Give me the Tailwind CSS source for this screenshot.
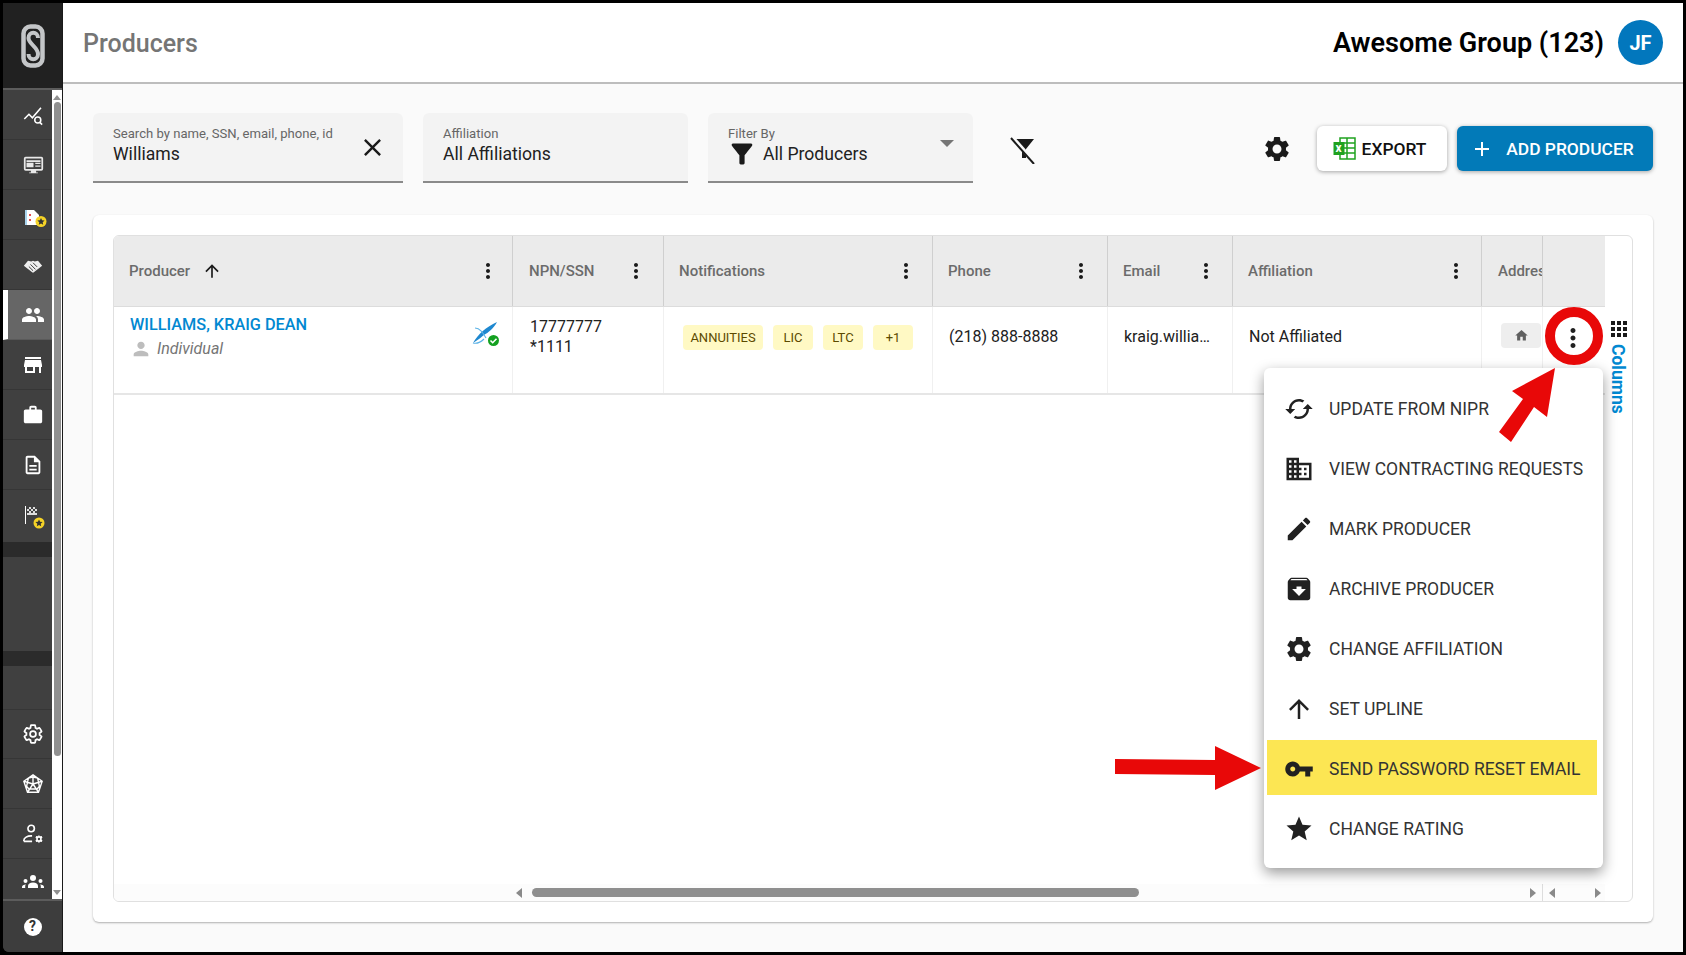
<!DOCTYPE html>
<html><head><meta charset="utf-8"><script src="https://cdn.jsdelivr.net/npm/@tailwindcss/browser@4"></script></head>
<body class="bg-black">
<div class="relative w-[1686px] h-[955px] overflow-hidden bg-black p-[3px] flex font-['Roboto',sans-serif] text-[#212121]">

<!-- SIDEBAR -->
<aside class="w-[60px] shrink-0 flex flex-col bg-[#404040] rounded-bl-md overflow-hidden border-r border-[#1a1a1a]">
  <div class="h-[87px] shrink-0 bg-[#212121] border-b-2 border-[#5c5c5c] flex items-center justify-center pt-[1px]">
    <svg class="w-[24px] h-[44px]" viewBox="0 0 24 44" fill="none" stroke="#c4c6c8"><rect x="2.500" y="2.500" width="19" height="39" rx="7" stroke-width="4.500"/><path d="M17 14c0-7-9.500-7-9.500 0c0 6 9.500 9 9.500 16c0 7-9.500 7-9.500 0" stroke-width="4"/></svg>
  </div>
  <div class="flex-1 flex min-h-0">
    <div class="w-[49px] flex flex-col text-white">
      <div class="h-[50px] shrink-0 flex items-center justify-center pl-[11px] border-b border-[#363636]">
        <svg class="w-[22px] h-[22px]" viewBox="0 0 24 24" fill="none" stroke="white" stroke-width="1.700"><path d="M2.500 16.400l5.100-5.200 3.700 3.800L20.700 4"/><circle cx="17.200" cy="17.500" r="3.300"/><path d="M19.500 20l2.500 2.500"/></svg>
      </div>
      <div class="h-[50px] shrink-0 flex items-center justify-center pl-[11px] border-b border-[#363636]">
        <svg class="w-[21px] h-[21px]" viewBox="0 0 24 24" fill="#e8e8e8"><path d="M3 3h18a2 2 0 0 1 2 2v12a2 2 0 0 1-2 2h-6v2h2v1H7v-1h2v-2H3a2 2 0 0 1-2-2V5a2 2 0 0 1 2-2zm0 2v12h18V5zM4 7h16v2H4zm0 3h8v5H4zm10 0h6v1.500h-6zm0 3h6v1.500h-6z"/></svg>
      </div>
      <div class="h-[50px] shrink-0 flex items-center justify-center pl-[13px] pt-[5px] border-b border-[#363636]">
        <svg class="w-[26px] h-[26px]" viewBox="0 0 26 26"><path d="M4 6h9l5 5v10H4z" fill="white"/><path d="M4 6h2v15H4z" fill="#a9d4ee"/><path d="M8 10h2v2H8zm0 5h2v2H8z" fill="#e25050"/><circle cx="20" cy="17.500" r="5.500" fill="#f5d327"/><path d="M20 14l1.100 2.300 2.500.3-1.900 1.700.5 2.500-2.200-1.300-2.200 1.300.5-2.500-1.900-1.700 2.500-.3z" fill="#333"/></svg>
      </div>
      <div class="h-[50px] shrink-0 flex items-center justify-center pl-[11px] pt-[4px] border-b border-[#363636]">
        <svg class="w-[20px] h-[15px]" viewBox="0 0 24 16" fill="#eeeeee"><path d="M1 7L6 1l4 1 2-1 2 1 4-1 5 6-10 8q-1 1-2 0z"/><path d="M7 8l5 5M9 5.500l6 6M12 3.500l5 5" stroke="#404040" stroke-width="1.200"/></svg>
      </div>
      <div class="h-[50px] shrink-0 flex items-center bg-[#666] border-l-[5px] border-white border-b border-b-[#5a5a5a] justify-center pl-[6px]">
        <svg class="w-[24px] h-[24px]" viewBox="0 0 24 24" fill="white"><path d="M16 11c1.660 0 2.990-1.340 2.990-3S17.660 5 16 5c-1.660 0-3 1.340-3 3s1.340 3 3 3zm-8 0c1.660 0 2.990-1.340 2.990-3S9.660 5 8 5C6.340 5 5 6.340 5 8s1.340 3 3 3zm0 2c-2.330 0-7 1.170-7 3.500V19h14v-2.500c0-2.330-4.670-3.500-7-3.500zm8 0c-.29 0-.62.02-.97.05 1.160.84 1.970 1.970 1.970 3.450V19h6v-2.500c0-2.330-4.670-3.500-7-3.500z"/></svg>
      </div>
      <div class="h-[50px] shrink-0 flex items-center justify-center pl-[11px] border-b border-[#363636]">
        <svg class="w-[20px] h-[20px]" viewBox="2 3 20 18" fill="white"><path d="M20 4H4v2h16V4zm1 10v-2l-1-5H4l-1 5v2h1v6h10v-6h4v6h2v-6h1zm-9 4H6v-4h6v4z"/></svg>
      </div>
      <div class="h-[50px] shrink-0 flex items-center justify-center pl-[11px] border-b border-[#363636]">
        <svg class="w-[22px] h-[22px]" viewBox="0 0 24 24" fill="white"><path d="M20 6h-4V4c0-1.110-.89-2-2-2h-4c-1.110 0-2 .89-2 2v2H4c-1.110 0-1.990.89-1.990 2L2 19c0 1.110.89 2 2 2h16c1.110 0 2-.89 2-2V8c0-1.110-.89-2-2-2zm-6 0h-4V4h4v2z"/></svg>
      </div>
      <div class="h-[50px] shrink-0 flex items-center justify-center pl-[11px] pt-[1px] border-b border-[#363636]">
        <svg class="w-[22px] h-[22px]" viewBox="0 0 24 24" fill="white"><path d="M8 16h8v2H8zm0-4h8v2H8zm6-10H6c-1.100 0-1.990.9-1.990 2L4 20c0 1.100.89 2 1.990 2H18c1.100 0 2-.9 2-2V8l-6-6zm4 18H6V4h7v5h5v11z"/></svg>
      </div>
      <div class="h-[52px] shrink-0 flex items-center justify-center pl-[13px] pt-[3px]">
        <svg class="w-[26px] h-[28px]" viewBox="0 0 26 28"><path d="M4 2h1v18H4z" fill="white"/><path d="M6 3h10v8H6z" fill="#ddd"/><path d="M6 3h2v2H6zm4 0h2v2h-2zm4 0h2v2h-2zM8 5h2v2H8zm4 0h2v2h-2zM6 7h2v2H6zm4 0h2v2h-2zm4 0h2v2h-2z" fill="#444"/><circle cx="18" cy="19" r="5.500" fill="#f5d327"/><path d="M18 15.500l1.100 2.300 2.500.3-1.900 1.700.5 2.500-2.200-1.300-2.200 1.300.5-2.500-1.900-1.700 2.500-.3z" fill="#333"/></svg>
      </div>
      <div class="h-[15px] shrink-0 bg-[#2b2b2b]"></div>
      <div class="h-[43px] shrink-0"></div>
      <div class="h-[51px] shrink-0"></div>
      <div class="h-[15px] shrink-0 bg-[#2b2b2b]"></div>
      <div class="h-[44px] shrink-0 border-b border-[#363636]"></div>
      <div class="h-[49px] shrink-0 flex items-center justify-center pl-[11px] border-b border-[#363636]">
        <svg class="w-[22px] h-[22px]" viewBox="0 0 24 24" fill="none" stroke="white" stroke-width="1.900"><path d="M19.140 12.940c.04-.3.06-.61.06-.94 0-.32-.02-.64-.07-.94l2.030-1.580c.18-.14.23-.41.12-.61l-1.920-3.320c-.12-.22-.37-.29-.59-.22l-2.390.96c-.5-.38-1.030-.7-1.620-.94l-.36-2.540c-.04-.24-.24-.41-.48-.41h-3.840c-.24 0-.43.17-.47.41l-.36 2.540c-.59.24-1.130.57-1.620.94l-2.390-.96c-.22-.08-.47 0-.59.22L2.740 8.870c-.12.21-.08.47.12.61l2.030 1.580c-.05.3-.09.63-.09.94s.02.64.07.94l-2.030 1.580c-.18.14-.23.41-.12.61l1.920 3.320c.12.22.37.29.59.22l2.390-.96c.5.38 1.030.7 1.620.94l.36 2.540c.05.24.24.41.48.41h3.840c.24 0 .44-.17.47-.41l.36-2.540c.59-.24 1.130-.56 1.620-.94l2.390.96c.22.08.47 0 .59-.22l1.920-3.320c.12-.22.07-.47-.12-.61l-2.010-1.580z"/><circle cx="12" cy="12" r="3.200"/></svg>
      </div>
      <div class="h-[50px] shrink-0 flex items-center justify-center pl-[11px] border-b border-[#363636]">
        <svg class="w-[22px] h-[22px]" viewBox="0 0 24 24" fill="none" stroke="white" stroke-width="1.500"><path d="M12 2l10 7-4 12H6L2 9zM12 2v10M22 9l-10 3M18 21l-6-9M6 21l6-9M2 9l10 3M7 5.500l-2 9 2.500 3h9l2.500-3-2-9-5-1z"/></svg>
      </div>
      <div class="h-[50px] shrink-0 flex items-center justify-center pl-[11px] border-b border-[#363636]">
        <svg class="w-[22px] h-[22px]" viewBox="0 0 24 24" fill="none" stroke="white" stroke-width="1.800"><circle cx="10" cy="6" r="3.500"/><path d="M2 20v-1c0-3 4-5 8-5h1M2 20h9"/><path d="M18.500 13l1 1.500 2-.3.8 1.800-1.200 1.500 1.200 1.500-.8 1.800-2-.3-1 1.500-1-1.500-2 .3-.8-1.800 1.200-1.500-1.200-1.500.8-1.800 2 .3z" fill="white" stroke="none"/><circle cx="18.500" cy="17.500" r="1.300" fill="#404040" stroke="none"/></svg>
      </div>
      <div class="h-[40px] shrink-0 flex items-center justify-center pl-[11px]">
        <svg class="w-[24px] h-[24px] translate-y-[3px]" viewBox="0 0 24 24" fill="white"><circle cx="12" cy="8" r="3"/><circle cx="4.500" cy="11" r="2"/><circle cx="19.500" cy="11" r="2"/><path d="M7 18v-2c0-2 2-3.500 5-3.500s5 1.500 5 3.500v2zM1 18v-1c0-1.500 1.500-2.500 4-2.500-.5.500-.8 1-.8 2V18zm22 0v-1c0-1.500-1.500-2.500-4-2.500.5.500.8 1 .8 2V18z"/></svg>
      </div>
    </div>
    <div class="w-[10px] bg-white flex flex-col items-center relative">
      <div class="w-0 h-0 border-x-[4px] border-x-transparent border-b-[5px] border-b-[#909090] mt-[5px]"></div>
      <div class="w-[7px] h-[654px] bg-[#909090] rounded-full mt-[2px]"></div>
      <div class="absolute bottom-[4px] w-0 h-0 border-x-[4px] border-x-transparent border-t-[5px] border-t-[#909090]"></div>
    </div>
  </div>
  <div class="h-[53px] shrink-0 border-t-2 border-[#5c5c5c] flex items-center justify-center bg-[#3d3d3d]">
    <div class="w-[18px] h-[18px] rounded-full bg-white text-[#333] text-[14px] font-bold flex items-center justify-center">?</div>
  </div>
</aside>

<!-- MAIN -->
<main class="flex-1 flex flex-col min-w-0 bg-[#fafafa]">
  <header class="h-[81px] shrink-0 bg-white border-b-2 border-[#bdbdbd] flex items-center pl-[20px] pr-[20px]">
    <h1 class="text-[25px] font-medium text-[#757575] leading-none mt-[2px]">Producers</h1>
    <div class="ml-auto text-[27px] font-semibold text-black leading-none mr-[14px] mt-[1px]">Awesome Group (123)</div>
    <div class="w-[45px] h-[45px] rounded-full bg-[#0277bd] text-white text-[20px] font-bold flex items-center justify-center">JF</div>
  </header>

  <div class="flex items-start pl-[30px] pr-[30px] mt-[29px] h-[70px] shrink-0">
    <div class="w-[310px] h-[70px] bg-[#f3f3f3] rounded-t-md border-b-2 border-[#8a8a8a] pl-[20px] pr-[16px] flex items-center justify-between">
      <div>
        <div class="text-[13.1px] leading-[16px] text-[#666] -mt-[3px]">Search by name, SSN, email, phone, id</div>
        <div class="text-[17.6px] leading-[22px] mt-[1px] text-[#212121]">Williams</div>
      </div>
      <svg class="w-[29px] h-[29px] text-[#1a1a1a] mt-[1px]" viewBox="0 0 24 24" fill="currentColor"><path d="M19 6.410 17.590 5 12 10.590 6.410 5 5 6.410 10.590 12 5 17.590 6.410 19 12 13.410 17.590 19 19 17.590 13.410 12z"/></svg>
    </div>
    <div class="ml-[20px] w-[265px] h-[70px] bg-[#f3f3f3] rounded-t-md border-b-2 border-[#8a8a8a] pl-[20px] flex flex-col justify-center">
      <div class="text-[13.1px] leading-[16px] text-[#666] -mt-[3px]">Affiliation</div>
      <div class="text-[17.6px] leading-[22px] mt-[1px]">All Affiliations</div>
    </div>
    <div class="ml-[20px] w-[265px] h-[70px] bg-[#f3f3f3] rounded-t-md border-b-2 border-[#8a8a8a] pl-[20px] pr-[19px] flex items-center justify-between">
      <div>
        <div class="text-[13.1px] leading-[16px] text-[#666] -mt-[3px]">Filter By</div>
        <div class="flex items-center text-[17.6px] leading-[22px] mt-[1px]">
          <svg class="w-[26px] h-[26px] ml-[1px] mr-[8px] -my-[3px]" viewBox="2 3 20 18" fill="#1a1a1a"><path d="M4.250 5.610C6.270 8.200 10 13 10 13v6c0 .55.45 1 1 1h2c.55 0 1-.45 1-1v-6s3.720-4.800 5.740-7.390c.51-.66.04-1.610-.79-1.610H5.040c-.83 0-1.300.95-.79 1.610z"/></svg>
          All Producers
        </div>
      </div>
      <div class="w-0 h-0 border-x-[7px] border-x-transparent border-t-[7px] border-t-[#757575] -mt-[8px]"></div>
    </div>
    <svg class="ml-[35px] mt-[23px] w-[28px] h-[28px]" viewBox="0 0 28 28"><path d="M6 3h20l-8 10v9h-4v-9z" fill="#1a1a1a"/><path d="M5 2l22 25" stroke="#fafafa" stroke-width="4"/><path d="M3 2l23 26" stroke="#1a1a1a" stroke-width="2"/></svg>
    <div class="ml-auto flex items-center h-[71px]">
      <svg class="w-[30px] h-[30px] mr-[25px]" viewBox="0 0 24 24" fill="#1a1a1a"><path d="M19.140 12.940c.04-.3.06-.61.06-.94 0-.32-.02-.64-.07-.94l2.030-1.580c.18-.14.23-.41.12-.61l-1.920-3.320c-.12-.22-.37-.29-.59-.22l-2.390.96c-.5-.38-1.030-.7-1.620-.94l-.36-2.540c-.04-.24-.24-.41-.48-.41h-3.840c-.24 0-.43.17-.47.41l-.36 2.540c-.59.24-1.130.57-1.620.94l-2.390-.96c-.22-.08-.47 0-.59.22L2.740 8.870c-.12.21-.08.47.12.61l2.030 1.580c-.05.3-.09.63-.09.94s.02.64.07.94l-2.030 1.580c-.18.14-.23.41-.12.61l1.920 3.320c.12.22.37.29.59.22l2.390-.96c.5.38 1.030.7 1.620.94l.36 2.540c.05.24.24.41.48.41h3.840c.24 0 .44-.17.47-.41l.36-2.540c.59-.24 1.130-.56 1.620-.94l2.390.96c.22.08.47 0 .59-.22l1.920-3.320c.12-.22.07-.47-.12-.61l-2.010-1.580zM12 15.600c-1.980 0-3.600-1.620-3.600-3.600s1.620-3.600 3.600-3.600 3.600 1.620 3.600 3.600-1.620 3.600-3.600 3.600z"/></svg>
      <button class="w-[130px] h-[45px] bg-white rounded-md shadow-[0_1px_4px_rgba(0,0,0,0.35)] flex items-center justify-center gap-[6px] text-[17.4px] font-medium text-[#111] pr-[4px]">
        <span class="relative w-[23px] h-[23px] block -ml-[1px]">
          <svg class="absolute inset-0 w-[23px] h-[23px]" viewBox="0 0 23 23" fill="none" stroke="#1fa21f" stroke-width="1.500"><path d="M7 1h15v21H7zM7 6h15M7 11h15M7 16h15M14 1v21"/><rect x="0.500" y="5" width="11" height="13" fill="#1fa21f" stroke="none"/></svg>
          <span class="absolute left-[1px] top-[5px] w-[10px] h-[13px] text-[12px] leading-[13px] text-center font-bold text-white">x</span>
        </span>
        <span class="pt-[1px]">EXPORT</span>
      </button>
      <button class="ml-[10px] w-[196px] h-[45px] bg-[#027ab8] rounded-md shadow-[0_1px_4px_rgba(0,0,0,0.35)] flex items-center justify-center gap-[12px] text-[17.4px] font-medium text-white pr-[6px]">
        <svg class="w-[24px] h-[24px]" viewBox="0 0 24 24" fill="white"><path d="M19 13h-6v6h-2v-6H5v-2h6V5h2v6h6v2z"/></svg>
        <span class="pt-[1px]">ADD PRODUCER</span>
      </button>
    </div>
  </div>

  <!-- CARD -->
  <section class="mx-[30px] mt-[32px] h-[707px] shrink-0 bg-white rounded-md shadow-[0_1px_2px_rgba(0,0,0,0.3)] p-[20px]">
    <div class="h-[667px] border border-[#e0e0e0] rounded-md flex overflow-hidden">
      <div class="w-[1491px] flex flex-col shrink-0">
        <div class="grid grid-cols-[399px_151px_269px_175px_125px_249px_61px_62px] h-[71px] bg-[#ebebeb] border-b border-[#dcdcdc] text-[15px] font-medium text-[#6b6b6b] shrink-0">
          <div class="flex items-center justify-between pl-[15px] pr-[12px] border-r border-[#cfcfcf]">
            <span class="flex items-center gap-[12px]">Producer
              <svg class="w-[20px] h-[20px]" viewBox="0 0 24 24" fill="#1a1a1a"><path d="M4 12l1.410 1.410L11 7.830V20h2V7.830l5.580 5.590L20 12l-8-8-8 8z"/></svg></span>
            <svg class="w-[24px] h-[24px] -mt-[1px]" viewBox="0 0 24 24" fill="#1a1a1a"><path d="M12 8c1.100 0 2-.9 2-2s-.9-2-2-2-2 .9-2 2 .9 2 2 2zm0 2c-1.100 0-2 .9-2 2s.9 2 2 2 2-.9 2-2-.9-2-2-2zm0 6c-1.100 0-2 .9-2 2s.9 2 2 2 2-.9 2-2-.9-2-2-2z"/></svg>
          </div>
          <div class="flex items-center justify-between pl-[16px] pr-[15px] border-r border-[#cfcfcf]">NPN/SSN
            <svg class="w-[24px] h-[24px] -mt-[1px]" viewBox="0 0 24 24" fill="#1a1a1a"><path d="M12 8c1.100 0 2-.9 2-2s-.9-2-2-2-2 .9-2 2 .9 2 2 2zm0 2c-1.100 0-2 .9-2 2s.9 2 2 2 2-.9 2-2-.9-2-2-2zm0 6c-1.100 0-2 .9-2 2s.9 2 2 2 2-.9 2-2-.9-2-2-2z"/></svg>
          </div>
          <div class="flex items-center justify-between pl-[15px] pr-[14px] border-r border-[#cfcfcf]">Notifications
            <svg class="w-[24px] h-[24px] -mt-[1px]" viewBox="0 0 24 24" fill="#1a1a1a"><path d="M12 8c1.100 0 2-.9 2-2s-.9-2-2-2-2 .9-2 2 .9 2 2 2zm0 2c-1.100 0-2 .9-2 2s.9 2 2 2 2-.9 2-2-.9-2-2-2zm0 6c-1.100 0-2 .9-2 2s.9 2 2 2 2-.9 2-2-.9-2-2-2z"/></svg>
          </div>
          <div class="flex items-center justify-between pl-[15px] pr-[14px] border-r border-[#cfcfcf]">Phone
            <svg class="w-[24px] h-[24px] -mt-[1px]" viewBox="0 0 24 24" fill="#1a1a1a"><path d="M12 8c1.100 0 2-.9 2-2s-.9-2-2-2-2 .9-2 2 .9 2 2 2zm0 2c-1.100 0-2 .9-2 2s.9 2 2 2 2-.9 2-2-.9-2-2-2zm0 6c-1.100 0-2 .9-2 2s.9 2 2 2 2-.9 2-2-.9-2-2-2z"/></svg>
          </div>
          <div class="flex items-center justify-between pl-[15px] pr-[14px] border-r border-[#cfcfcf]">Email
            <svg class="w-[24px] h-[24px] -mt-[1px]" viewBox="0 0 24 24" fill="#1a1a1a"><path d="M12 8c1.100 0 2-.9 2-2s-.9-2-2-2-2 .9-2 2 .9 2 2 2zm0 2c-1.100 0-2 .9-2 2s.9 2 2 2 2-.9 2-2-.9-2-2-2zm0 6c-1.100 0-2 .9-2 2s.9 2 2 2 2-.9 2-2-.9-2-2-2z"/></svg>
          </div>
          <div class="flex items-center justify-between pl-[15px] pr-[13px] border-r border-[#cfcfcf]">Affiliation
            <svg class="w-[24px] h-[24px] -mt-[1px]" viewBox="0 0 24 24" fill="#1a1a1a"><path d="M12 8c1.100 0 2-.9 2-2s-.9-2-2-2-2 .9-2 2 .9 2 2 2zm0 2c-1.100 0-2 .9-2 2s.9 2 2 2 2-.9 2-2-.9-2-2-2zm0 6c-1.100 0-2 .9-2 2s.9 2 2 2 2-.9 2-2-.9-2-2-2z"/></svg>
          </div>
          <div class="flex items-center pl-[16px] border-r border-[#cfcfcf] overflow-hidden whitespace-nowrap">Address</div>
          <div></div>
        </div>
        <div class="grid grid-cols-[399px_151px_269px_175px_125px_249px_61px_62px] h-[88px] border-b-2 border-[#e6e6e6] text-[16px] text-[#212121] shrink-0">
          <div class="relative pl-[16px] pt-[8px] border-r border-[#f0f0f0]">
            <div class="text-[16.3px] leading-[20px] font-medium text-[#0288d1]">WILLIAMS, KRAIG DEAN</div>
            <div class="flex items-center mt-[3px] text-[16px] leading-[20px] italic text-[#757575]">
              <svg class="w-[22px] h-[22px] mr-[5px]" viewBox="0 0 24 24" fill="#bdbdbd"><path d="M12 12c2.210 0 4-1.790 4-4s-1.790-4-4-4-4 1.790-4 4 1.790 4 4 4zm0 2c-2.670 0-8 1.340-8 4v2h16v-2c0-2.660-5.330-4-8-4z"/></svg>
              Individual
            </div>
            <svg class="absolute left-[358px] top-[14px] w-[28px] h-[26px]" viewBox="0 0 28 26" fill="none"><path d="M1 22C6 13 14 6 25 1c-3 6-9 11-13 13-2 1-3 3-5 4z" fill="#1e88d0"/><path d="M3 7c5 0 8 5 11 10M1 22c4 1 8-1 11-4" stroke="#5db3e6" stroke-width="1.100"/><circle cx="21.500" cy="19.500" r="5.500" fill="#13a020"/><path d="M18.500 19.500l2.200 2.200 3.800-4" stroke="white" stroke-width="1.600"/></svg>
          </div>
          <div class="pl-[17px] pt-[10px] leading-[20px] border-r border-[#f0f0f0]">17777777<br>*1111</div>
          <div class="flex items-start gap-[10px] pl-[19px] pt-[18px] border-r border-[#f0f0f0] text-[13px] text-[#5c4a00]">
            <span class="w-[80px] h-[25px] rounded bg-[#fff9c4] flex items-center justify-center">ANNUITIES</span>
            <span class="w-[40px] h-[25px] rounded bg-[#fff9c4] flex items-center justify-center">LIC</span>
            <span class="w-[40px] h-[25px] rounded bg-[#fff9c4] flex items-center justify-center">LTC</span>
            <span class="w-[40px] h-[25px] rounded bg-[#fff9c4] flex items-center justify-center">+1</span>
          </div>
          <div class="pl-[16px] pt-[20px] leading-[20px] border-r border-[#f0f0f0]">(218) 888-8888</div>
          <div class="pl-[16px] pt-[20px] leading-[20px] border-r border-[#f0f0f0] whitespace-nowrap">kraig.willia…</div>
          <div class="pl-[16px] pt-[20px] leading-[20px] border-r border-[#f0f0f0]">Not Affiliated</div>
          <div class="pl-[19px] pt-[16px] border-r border-[#f0f0f0]">
            <span class="w-[40px] h-[25px] rounded bg-[#eeeeee] flex items-center justify-center">
              <svg class="w-[15px] h-[15px]" viewBox="0 0 24 24" fill="#5f5f5f"><path d="M10 20v-6h4v6h5v-8h3L12 3 2 12h3v8z"/></svg>
            </span>
          </div>
          <div class="flex justify-center pt-[16px] pr-[3px]">
            <svg class="w-[30px] h-[30px]" viewBox="0 0 24 24" fill="#212121"><path d="M12 8c1.100 0 2-.9 2-2s-.9-2-2-2-2 .9-2 2 .9 2 2 2zm0 2c-1.100 0-2 .9-2 2s.9 2 2 2 2-.9 2-2-.9-2-2-2zm0 6c-1.100 0-2 .9-2 2s.9 2 2 2 2-.9 2-2-.9-2-2-2z"/></svg>
          </div>
        </div>
        <div class="flex-1"></div>
        <div class="h-[17px] bg-[#fcfcfc] flex items-center shrink-0 relative">
          <div class="ml-[402px] w-0 h-0 border-y-[5px] border-y-transparent border-r-[6px] border-r-[#8a8a8a]"></div>
          <div class="ml-[10px] w-[607px] h-[9px] rounded-full bg-[#8f8f8f]"></div>
          <div class="ml-[391px] w-0 h-0 border-y-[5px] border-y-transparent border-l-[6px] border-l-[#8a8a8a]"></div>
          <div class="ml-[6px] w-px h-[17px] bg-[#dddddd]"></div>
          <div class="ml-[6px] w-0 h-0 border-y-[5px] border-y-transparent border-r-[6px] border-r-[#8a8a8a]"></div>
          <div class="ml-[40px] w-0 h-0 border-y-[5px] border-y-transparent border-l-[6px] border-l-[#8a8a8a]"></div>
        </div>
      </div>
      <div class="flex-1 flex flex-col items-center pt-[85px]">
        <svg class="w-[16px] h-[16px] shrink-0" viewBox="4 4 16 16" fill="#1a1a1a"><path d="M4 8h4V4H4v4zm6 12h4v-4h-4v4zm-6 0h4v-4H4v4zm0-6h4v-4H4v4zm6 0h4v-4h-4v4zm6-10v4h4V4h-4zm-6 4h4V4h-4v4zm6 6h4v-4h-4v4zm0 6h4v-4h-4v4z"/></svg>
        <span class="mt-[7px] text-[17.5px] leading-[20px] font-bold text-[#0288d1] [writing-mode:vertical-rl] -ml-[1px]">Columns</span>
      </div>
    </div>
  </section>
</main>

<!-- CONTEXT MENU -->
<div class="absolute left-[1264px] top-[368px] w-[339px] h-[500px] bg-white rounded-md shadow-[0_5px_14px_rgba(0,0,0,0.4)] pt-[11px] text-[17.5px] text-[#333]">
  <div class="h-[60px] flex items-center pl-[65px] relative">
    <svg class="absolute left-[20px] -mt-[1px] w-[30px] h-[30px] -rotate-90" viewBox="0 0 24 24" fill="#212121"><path d="M12 4V1L8 5l4 4V6c3.310 0 6 2.690 6 6 0 1.010-.25 1.970-.7 2.800l1.460 1.460C19.540 15.030 20 13.570 20 12c0-4.420-3.580-8-8-8zm0 14c-3.310 0-6-2.690-6-6 0-1.010.25-1.970.7-2.800L5.240 7.740C4.460 8.970 4 10.430 4 12c0 4.420 3.580 8 8 8v3l4-4-4-4v3z"/></svg>
    UPDATE FROM NIPR</div>
  <div class="h-[60px] flex items-center pl-[65px] relative">
    <svg class="absolute left-[20px] w-[30px] h-[30px]" viewBox="0 0 24 24" fill="#212121"><path d="M12 7V3H2v18h20V7H12zM6 19H4v-2h2v2zm0-4H4v-2h2v2zm0-4H4V9h2v2zm0-4H4V5h2v2zm4 12H8v-2h2v2zm0-4H8v-2h2v2zm0-4H8V9h2v2zm0-4H8V5h2v2zm10 12h-8v-2h2v-2h-2v-2h2v-2h-2V9h8v10zm-2-8h-2v2h2v-2zm0 4h-2v2h2v-2z"/></svg>
    VIEW CONTRACTING REQUESTS</div>
  <div class="h-[60px] flex items-center pl-[65px] relative">
    <svg class="absolute left-[20px] -mt-[1px] w-[30px] h-[30px]" viewBox="0 0 24 24" fill="#212121"><path d="M3 17.250V21h3.750L17.810 9.940l-3.750-3.750L3 17.250zM20.710 7.040c.39-.39.39-1.020 0-1.410l-2.340-2.340c-.39-.39-1.020-.39-1.410 0l-1.830 1.830 3.750 3.750 1.830-1.830z"/></svg>
    MARK PRODUCER</div>
  <div class="h-[60px] flex items-center pl-[65px] relative">
    <svg class="absolute left-[20px] -mt-[1px] w-[30px] h-[30px]" viewBox="0 0 24 24" fill="#212121"><path d="M20.540 5.230l-1.390-1.680C18.880 3.210 18.470 3 18 3H6c-.47 0-.88.21-1.160.55L3.460 5.230C3.170 5.570 3 6.020 3 6.500V19c0 1.100.9 2 2 2h14c1.100 0 2-.9 2-2V6.500c0-.48-.17-.93-.46-1.270zM12 17.500L6.500 12H10v-2h4v2h3.500L12 17.500zM5.120 5l.81-1h12l.94 1H5.120z"/></svg>
    ARCHIVE PRODUCER</div>
  <div class="h-[60px] flex items-center pl-[65px] relative">
    <svg class="absolute left-[20px] -mt-[1px] w-[30px] h-[30px]" viewBox="0 0 24 24" fill="#212121"><path d="M19.140 12.940c.04-.3.06-.61.06-.94 0-.32-.02-.64-.07-.94l2.030-1.580c.18-.14.23-.41.12-.61l-1.920-3.320c-.12-.22-.37-.29-.59-.22l-2.390.96c-.5-.38-1.030-.7-1.620-.94l-.36-2.540c-.04-.24-.24-.41-.48-.41h-3.840c-.24 0-.43.17-.47.41l-.36 2.540c-.59.24-1.130.57-1.620.94l-2.390-.96c-.22-.08-.47 0-.59.22L2.740 8.870c-.12.21-.08.47.12.61l2.030 1.580c-.05.3-.09.63-.09.94s.02.64.07.94l-2.030 1.580c-.18.14-.23.41-.12.61l1.920 3.320c.12.22.37.29.59.22l2.390-.96c.5.38 1.030.7 1.620.94l.36 2.540c.05.24.24.41.48.41h3.840c.24 0 .44-.17.47-.41l.36-2.540c.59-.24 1.130-.56 1.620-.94l2.390.96c.22.08.47 0 .59-.22l1.920-3.320c.12-.22.07-.47-.12-.61l-2.010-1.580zM12 15.600c-1.980 0-3.600-1.620-3.600-3.600s1.620-3.600 3.600-3.600 3.600 1.620 3.600 3.600-1.620 3.600-3.600 3.600z"/></svg>
    CHANGE AFFILIATION</div>
  <div class="h-[60px] flex items-center pl-[65px] relative">
    <svg class="absolute left-[20px] -mt-[1px] w-[30px] h-[30px]" viewBox="0 0 24 24" fill="#212121"><path d="M4 12l1.410 1.410L11 7.830V20h2V7.830l5.580 5.590L20 12l-8-8-8 8z"/></svg>
    SET UPLINE</div>
  <div class="h-[60px] flex items-center pl-[65px] relative">
    <div class="absolute left-[3px] top-[1px] w-[330px] h-[55px] bg-[#fce653]"></div>
    <svg class="absolute left-[20px] -mt-[1px] w-[30px] h-[30px]" viewBox="0 0 24 24" fill="#212121"><path d="M12.650 10C11.830 7.670 9.610 6 7 6c-3.310 0-6 2.690-6 6s2.690 6 6 6c2.610 0 4.830-1.670 5.650-4H17v4h4v-4h2v-4H12.650zM7 14c-1.100 0-2-.9-2-2s.9-2 2-2 2 .9 2 2-.9 2-2 2z"/></svg>
    <span class="relative">SEND PASSWORD RESET EMAIL</span></div>
  <div class="h-[60px] flex items-center pl-[65px] relative">
    <svg class="absolute left-[20px] -mt-[1px] w-[30px] h-[30px]" viewBox="0 0 24 24" fill="#212121"><path d="M12 17.270L18.180 21l-1.640-7.030L22 9.240l-7.190-.61L12 2 9.190 8.630 2 9.240l5.460 4.730L5.820 21z"/></svg>
    CHANGE RATING</div>
</div>

<!-- ANNOTATIONS -->
<svg class="absolute inset-0 w-[1686px] h-[955px] pointer-events-none" viewBox="0 0 1686 955">
  <circle cx="1574" cy="336" r="24" fill="none" stroke="#e80808" stroke-width="10"/>
  <polygon fill="#e80808" points="1555,368 1547,417 1534,407 1511,442 1499,432 1523,399 1512,391"/>
  <polygon fill="#e80808" points="1115,759 1215,760 1215,746 1261,768 1215,790 1215,775 1115,774"/>
</svg>
</div>
</body></html>
